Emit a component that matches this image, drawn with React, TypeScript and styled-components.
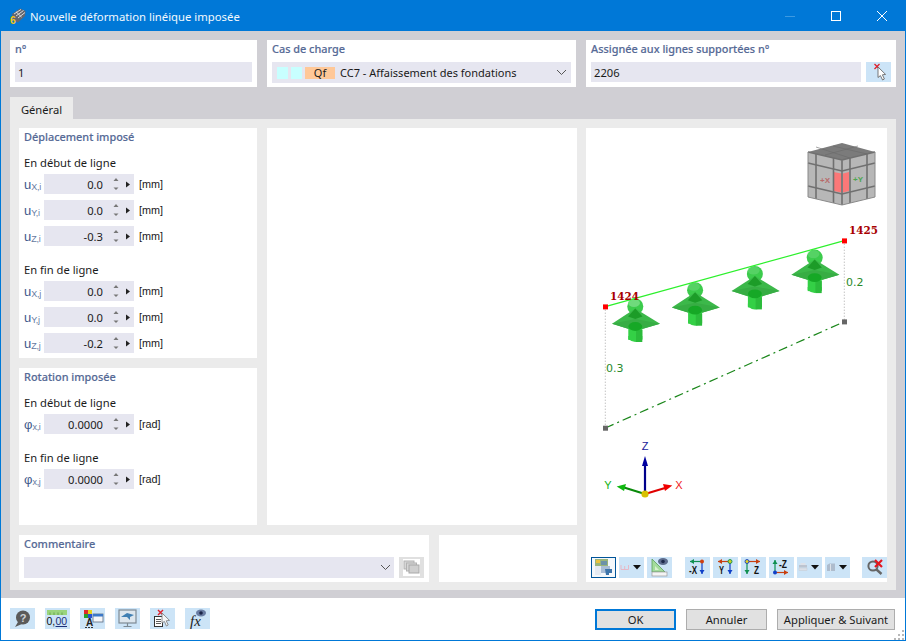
import React from "react";
import styled, { createGlobalStyle } from "styled-components";

const GlobalStyle = createGlobalStyle`
  html, body { margin: 0; padding: 0; background: #fff; }
  body { font-family: "Noto Sans", "Open Sans", sans-serif; font-size: 12px; color: #1a1a1a; }
  * { box-sizing: border-box; }
`;

const Win = styled.div`
  width: 906px;
  height: 641px;
  border: 1px solid #0078d7;
  display: flex;
  flex-direction: column;
  background: #fff;
  position: relative;
  overflow: hidden;
`;

const TitleBar = styled.div`
  height: 30px;
  flex: none;
  background: #0078d7;
  color: #fff;
  display: flex;
  align-items: center;
  padding-left: 9px;
`;

const TitleText = styled.div`
  flex: 1;
  margin-left: 4px;
  font-size: 11.3px;
  color: #f2f8fd;
`;

const CaptionButton = styled.div`
  width: 46px;
  height: 30px;
  display: flex;
  align-items: center;
  justify-content: center;
`;

const Body = styled.div`
  flex: 1;
  background: #d0cfd4;
  padding: 9px 9px 8px;
  display: flex;
  flex-direction: column;
`;

const TopRow = styled.div`
  display: grid;
  grid-template-columns: 247px 309px 310px;
  column-gap: 10px;
  height: 47px;
  margin-bottom: 10px;
`;

const Panel = styled.div`
  background: #fff;
  padding: 0 5px;
`;

const PanelLabel = styled.div`
  height: 22px;
  line-height: 17px;
  font-size: 10.9px;
  font-weight: 500;
  color: #566a96;
  -webkit-text-stroke: 0.15px #566a96;
`;

const TextInput = styled.div`
  height: 20px;
  flex: 1;
  background: #e6e6f0;
  padding-left: 3px;
  line-height: 21px;
  font-size: 11.2px;
  color: #1a1a1a;
`;

const InputRow = styled.div`
  display: flex;
  gap: 5px;
`;

const SelectBox = styled.div`
  height: 21px;
  flex: 1;
  background: #e6e6f0;
  display: flex;
  align-items: center;
  padding-left: 5px;
  padding-right: 4px;
  font-size: 11px;
  color: #1a1a1a;
`;

const Swatch = styled.span<{ $wide?: boolean; $color: string }>`
  display: flex;
  align-items: center;
  justify-content: center;
  width: ${(p) => (p.$wide ? 30 : 11)}px;
  height: 12px;
  background: ${(p) => p.$color};
  margin-right: 3px;
`;

const SelectText = styled.span`
  flex: 1;
  margin-left: 2px;
`;

const IconButton = styled.div<{ $active?: boolean; $muted?: boolean }>`
  width: 25px;
  height: 21px;
  flex: none;
  background: ${(p) => (p.$active ? "#f4f8fb" : p.$muted ? "#e0e0e0" : "#cce4f7")};
  border: ${(p) => (p.$active ? "1px solid #005499" : "none")};
  display: flex;
  align-items: center;
  justify-content: center;
`;

const ShortIconButton = styled(IconButton)`
  height: 20px;
`;

const TabStrip = styled.div`
  display: flex;
  height: 22px;
`;

const Tab = styled.div`
  width: 63px;
  background: #ebebeb;
  text-align: center;
  line-height: 25px;
  font-size: 11.2px;
`;

const TabContent = styled.div`
  flex: 1;
  background: #ebebeb;
  padding: 9px 9px 8px;
  display: flex;
  gap: 9px;
`;

const LeftArea = styled.div`
  width: 558px;
  display: flex;
  flex-direction: column;
  gap: 10px;
`;

const UpperArea = styled.div`
  height: 397px;
  display: flex;
  gap: 10px;
`;

const InputsColumn = styled.div`
  width: 238px;
  display: flex;
  flex-direction: column;
  gap: 10px;
`;

const SectionPanel = styled(Panel)<{ $height: number }>`
  height: ${(p) => p.$height}px;
`;

const SectionHead = styled.div`
  height: 18px;
  line-height: 18px;
  font-size: 10.9px;
  font-weight: 500;
  color: #566a96;
  -webkit-text-stroke: 0.15px #566a96;
`;

const Group = styled.div<{ $first?: boolean }>`
  margin-top: ${(p) => (p.$first ? 8 : 15)}px;
`;

const SubHead = styled.div`
  height: 20px;
  line-height: 17px;
  font-size: 11.2px;
`;

const Rows = styled.div`
  display: flex;
  flex-direction: column;
  gap: 6px;
`;

const FieldRow = styled.div`
  display: flex;
  align-items: center;
  height: 20px;
`;

const SymbolLabel = styled.div`
  width: 20px;
  font-family: "Liberation Sans", sans-serif;
  font-size: 13px;
  color: #3f5a8c;
  white-space: nowrap;
  sub {
    font-size: 9px;
    vertical-align: baseline;
    position: relative;
    top: 1px;
    color: #66799f;
    letter-spacing: -0.3px;
  }
`;

const SpinBox = styled.div`
  width: 90px;
  height: 20px;
  background: #e6e6f0;
  display: flex;
  align-items: center;
  font-size: 11.2px;
`;

const SpinValue = styled.div`
  width: 59px;
  text-align: right;
`;

const Unit = styled.div`
  margin-left: 5px;
  font-family: "Liberation Sans", sans-serif;
  font-size: 10.8px;
`;

const MiddlePanel = styled(Panel)`
  flex: 1;
`;

const LowerArea = styled.div`
  flex: 1;
  display: flex;
  gap: 10px;
`;

const CommentPanel = styled(Panel)`
  width: 410px;
`;

const BlankPanel = styled(Panel)`
  flex: 1;
`;

const Chevron = styled.svg`
  width: 11px;
  height: 7px;
  flex: none;
  margin-left: auto;
  margin-right: 0;
`;

const CommentSelect = styled(SelectBox)`
  padding-right: 3px;
`;

const Viewport = styled.div`
  width: 301px;
  background: #fff;
  display: flex;
  flex-direction: column;
`;

const Scene = styled.svg`
  width: 301px;
  height: 429px;
  flex: none;
  display: block;
`;

const SceneToolbar = styled.div`
  display: flex;
  padding-left: 5px;
  gap: 3px;
`;

const ToolGap = styled.div`
  width: 7px;
`;

const Footer = styled.div`
  height: 42px;
  flex: none;
  background: #fff;
  display: flex;
  justify-content: space-between;
  padding: 10px 10px 0 9px;
`;

const FooterTools = styled.div`
  display: flex;
  gap: 10px;
`;

const FooterActions = styled.div`
  display: flex;
  gap: 10px;
  padding-top: 1px;
`;

const ActionButton = styled.div<{ $primary?: boolean; $width: number }>`
  width: ${(p) => p.$width}px;
  height: 21px;
  background: #e1e1e1;
  border: ${(p) => (p.$primary ? "2px solid #0078d7" : "1px solid #adadad")};
  text-align: center;
  line-height: ${(p) => (p.$primary ? 17 : 19)}px;
  font-size: 11.2px;
`;

const Grip = styled.svg`
  position: absolute;
  right: 0;
  bottom: 0;
  width: 12px;
  height: 12px;
`;

const ChevronIcon = () => (
  <Chevron viewBox="0 0 11 7">
    <path d="M1 1 L5.5 5.5 L10 1" fill="none" stroke="#555" strokeWidth="1" />
  </Chevron>
);

const SpinArrows = () => (
  <svg width="31" height="20" viewBox="0 0 31 20">
    <path d="M10.5 7 L13 4 L15.5 7 Z" fill="#777" />
    <path d="M10.5 13.5 L13 16 L15.5 13.5 Z" fill="#777" />
    <path d="M23 7.5 L27 10.5 L23 13.5 Z" fill="#222" />
  </svg>
);

type SpinFieldProps = {
  base: string;
  sub: string;
  value: string;
  unit: string;
};

const SpinField: React.FC<SpinFieldProps> = ({ base, sub, value, unit }) => (
  <FieldRow>
    <SymbolLabel>
      {base}
      <sub>{sub}</sub>
    </SymbolLabel>
    <SpinBox>
      <SpinValue>{value}</SpinValue>
      <SpinArrows />
    </SpinBox>
    <Unit>{unit}</Unit>
  </FieldRow>
);

const AppIcon = () => (
  <svg width="16" height="16" viewBox="0 0 16 16">
    <path d="M2 6 L10 0.5 L15.5 3 L15 8 L8 14.5 L3 12 Z" fill="#63666e" />
    <path d="M4 6 L11 1.5 M6 8 L13.5 2.5 M8 10 L15 4.5 M6 3.7 L11.5 9" stroke="#e4e6ea" strokeWidth="0.9" />
    <text x="0" y="15.5" fontFamily="Liberation Sans" fontWeight="700" fontSize="10.5" fill="#f4c414">
      6
    </text>
  </svg>
);

const PickIcon = () => (
  <svg width="25" height="20" viewBox="0 0 25 20">
    <path d="M8.5 2 L13.5 7 M13.5 2 L8.5 7" stroke="#e0202c" strokeWidth="1.3" />
    <path d="M12 5 L12 15.5 L14.4 13.6 L16.6 18 L18.4 17 L16.4 12.8 L19.6 12.4 Z" fill="#fff" stroke="#6a6a6a" strokeWidth="0.9" />
  </svg>
);

const StackIcon = () => (
  <svg width="25" height="21" viewBox="0 0 25 21">
    <rect x="4" y="2" width="17" height="17" fill="#fff" />
    <rect x="5" y="4" width="10" height="8" fill="#d6d6d6" stroke="#b2b2b2" />
    <rect x="7.5" y="6" width="10" height="8" fill="#d6d6d6" stroke="#b2b2b2" />
    <rect x="10" y="8" width="10" height="8" fill="#cfcfcf" stroke="#a8a8a8" />
  </svg>
);

const SnapshotIcon = () => (
  <svg width="23" height="19" viewBox="0 0 23 19">
    <rect x="3" y="1" width="13" height="7" fill="#9ab47a" />
    <rect x="4" y="2" width="4" height="3" fill="#e8c23c" />
    <rect x="9" y="3" width="6" height="4" fill="#6c92a8" />
    <rect x="3" y="8" width="6" height="9" fill="#e4eaf2" />
    <rect x="9" y="8" width="9" height="7" fill="#a9bdd6" />
    <path d="M13 11 H20 V15 H17 V17 H14 Z" fill="#3d74aa" />
  </svg>
);

const DropArrow = () => (
  <svg width="8" height="5" viewBox="0 0 8 5">
    <path d="M0 0 H8 L4 4.5 Z" fill="#111" />
  </svg>
);

const DropButton = styled(IconButton)`
  gap: 2px;
  justify-content: flex-start;
  padding-left: 1px;
`;

const FadedComb = () => (
  <svg width="11" height="21" viewBox="0 0 11 21">
    <path d="M1 8 V12.5 H8.5 V8 M4.7 9 V12.5" fill="none" stroke="#e6b8c6" strokeWidth="1" />
  </svg>
);

const FadedPrinter = () => (
  <svg width="11" height="21" viewBox="0 0 11 21">
    <rect x="1" y="8" width="8" height="2.5" fill="#bcc4d0" />
    <rect x="1" y="11" width="8" height="2.5" fill="#dbe0e8" stroke="#c4cad4" strokeWidth="0.5" />
    <rect x="2.5" y="6" width="5" height="2" fill="#dde1e8" />
  </svg>
);

const FadedBox = () => (
  <svg width="11" height="21" viewBox="0 0 11 21">
    <path d="M1 8 L3.5 6.5 H9 V14 H1 Z" fill="#aebccd" />
    <path d="M4.5 7 V14" stroke="#dde3ea" />
  </svg>
);

const SetSquareIcon = () => (
  <svg width="25" height="21" viewBox="0 0 25 21">
    <path d="M5 2 L5 15 L18 15 Z" fill="#a3dc9c" stroke="#5aa05a" strokeWidth="0.8" />
    <path d="M8 9 L8 13 L12 13 Z" fill="#d8f0d0" />
    <rect x="5" y="15" width="15" height="4" fill="#f4f4f4" stroke="#9a9a9a" strokeWidth="0.7" />
    <ellipse cx="16" cy="4.5" rx="5" ry="3.4" fill="#5d6d8e" />
    <circle cx="16" cy="4.5" r="1.8" fill="#1e2a4c" />
  </svg>
);

type AxisIconProps = {
  origin: [number, number];
  hEnd: number;
  vEnd: number;
  hColor: string;
  vColor: string;
  dot: string;
  dotStroke?: string;
  label: string;
  labelX: number;
  labelY: number;
  labelWidth: number;
};

const AxisIcon: React.FC<AxisIconProps> = ({ origin, hEnd, vEnd, hColor, vColor, dot, dotStroke, label, labelX, labelY, labelWidth }) => {
  const [ox, oy] = origin;
  const hs = hEnd > ox ? -1 : 1;
  const vs = vEnd > oy ? -1 : 1;
  return (
    <svg width="25" height="21" viewBox="0 0 25 21">
      <path d={`M${ox} ${oy} H${hEnd}`} stroke={hColor} strokeWidth="1.2" />
      <path d={`M${hEnd} ${oy} l${hs * 4} -2.5 v5 Z`} fill={hColor} />
      <path d={`M${ox} ${oy} V${vEnd}`} stroke={vColor} strokeWidth="1.2" />
      <path d={`M${ox} ${vEnd} l-2.5 ${vs * 4} h5 Z`} fill={vColor} />
      <circle cx={ox} cy={oy} r="2" fill={dot} stroke={dotStroke} strokeWidth={dotStroke ? 0.9 : 0} />
      <text
        x={labelX}
        y={labelY}
        textLength={labelWidth}
        lengthAdjust="spacingAndGlyphs"
        fontFamily="Liberation Sans"
        fontWeight="700"
        fontSize="10"
        fill="#111"
      >
        {label}
      </text>
    </svg>
  );
};

const ResetViewIcon = () => (
  <svg width="25" height="21" viewBox="0 0 25 21">
    <circle cx="11" cy="9" r="4.6" fill="none" stroke="#666" strokeWidth="2" />
    <path d="M14.5 12.5 L19.5 17" stroke="#666" strokeWidth="2.4" />
    <path d="M13 3 L20 10 M20 3 L13 10" stroke="#e4161e" strokeWidth="2.2" />
  </svg>
);

const HelpIcon = () => (
  <svg width="25" height="21" viewBox="0 0 25 21">
    <circle cx="13" cy="9.5" r="7" fill="#5a5a5a" />
    <path d="M8 14 L5 19 L12 16 Z" fill="#5a5a5a" />
    <text x="13" y="13.5" textAnchor="middle" fontFamily="Liberation Sans" fontWeight="700" fontSize="11" fill="#cfd3d6">
      ?
    </text>
  </svg>
);

const UnitsIcon = () => (
  <svg width="25" height="21" viewBox="0 0 25 21">
    <rect x="2" y="2" width="20" height="5" fill="#9ad47c" />
    <path d="M5 4.5 V7 M9 4.5 V7 M13 4.5 V7 M17 4.5 V7" stroke="#5d9a45" strokeWidth="0.8" />
    <text x="1.5" y="16.5" fontFamily="Liberation Sans" fontSize="10.5" fill="#111">
      0,
    </text>
    <text x="10.5" y="16.5" fontFamily="Liberation Sans" fontSize="10.5" fill="#1c2f7a">
      00
    </text>
    <path d="M10.5 18.5 H22" stroke="#1c2f7a" />
  </svg>
);

const ColorsIcon = () => (
  <svg width="25" height="21" viewBox="0 0 25 21">
    <rect x="4" y="2" width="4" height="4" fill="#e02a2a" />
    <rect x="8" y="2" width="4" height="4" fill="#e6d21c" />
    <rect x="4" y="6" width="4" height="4" fill="#2aa02a" />
    <rect x="8" y="6" width="4" height="4" fill="#2a52d0" />
    <rect x="13" y="6" width="10" height="8" fill="#f4f6f9" stroke="#5a6a80" strokeWidth="0.8" />
    <rect x="13" y="6" width="10" height="2.5" fill="#3a78c8" />
    <text x="6" y="18" fontFamily="Liberation Sans" fontWeight="700" fontSize="10" fill="#222">
      A
    </text>
    <path d="M5 19.5 H14" stroke="#333" strokeDasharray="2 1" />
  </svg>
);

const MonitorIcon = () => (
  <svg width="25" height="21" viewBox="0 0 25 21">
    <rect x="4" y="2" width="17" height="13" fill="#dce6ee" stroke="#7d8a94" strokeWidth="1.2" />
    <path d="M6 9 L12 5 L19 7 L15 9 L15 12 L12 9 Z" fill="#3f7fb3" />
    <path d="M12.5 15 V18 M8.5 18.5 H16.5" stroke="#7d8a94" strokeWidth="1.2" />
  </svg>
);

const DocPickIcon = () => (
  <svg width="25" height="21" viewBox="0 0 25 21">
    <rect x="4.5" y="8.5" width="8" height="10" fill="#fff" stroke="#333" />
    <path d="M6 11.5 H11 M6 13.5 H11 M6 15.5 H11" stroke="#333" strokeWidth="0.8" />
    <path d="M8 2 L13 7 M13 2 L8 7" stroke="#e0202c" strokeWidth="1.4" />
    <path d="M12 5 L12 15 L14.4 13.4 L16.4 18 L18.2 17 L16.2 12.8 L19.5 12.4 Z" fill="#f4f6f8" stroke="#777" strokeWidth="0.8" />
  </svg>
);

const FormulaIcon = () => (
  <svg width="25" height="21" viewBox="0 0 25 21">
    <text x="5" y="17.5" fontFamily="Liberation Serif" fontStyle="italic" fontSize="15" fill="#222">
      fx
    </text>
    <ellipse cx="16" cy="5" rx="5" ry="3.4" fill="#6a7da3" />
    <circle cx="16" cy="5" r="1.8" fill="#1a2448" />
  </svg>
);

const ForceArrow: React.FC<{ index: number }> = ({ index }) => (
  <g transform={`translate(${59.8 * index} ${-16.3 * index})`}>
    <circle cx="635.3" cy="306.5" r="8" fill="#3ccb4c" />
    <ellipse cx="634" cy="303" rx="6" ry="4" fill="#74dc82" opacity={index === 0 ? 0.9 : 0.45} />
    <path d="M612 323.7 L635.3 308.5 L660 323.7 L635.3 331 Z" fill="#3cb84a" />
    <path d="M612 323.7 L635.3 319 L660 323.7 L635.3 331 Z" fill="#37ad44" />
    <path d="M628 316.5 L635.3 308.5 L642.5 316.5 L635.3 319 Z" fill="#1c9c28" />
    <rect x="628.3" y="326" width="14" height="14" fill="#34d046" />
    <path d="M628.3 339 Q635.3 345 642.3 339 V336 H628.3 Z" fill="#34d046" />
    <rect x="636" y="330" width="6.3" height="12" fill="#2bbb3b" />
    <ellipse cx="635.3" cy="326.5" rx="7" ry="4.4" fill="#16a826" />
  </g>
);

const ViewCube = () => (
  <g>
    <path d="M808 152 L842 143 L875 152 L842 160 Z" fill="#7b7b7b" />
    <path d="M808 152 L842 160 L842 205 L808 197 Z" fill="#b7b7b7" />
    <path d="M875 152 L842 160 L842 205 L875 197 Z" fill="#b7b7b7" />
    <path d="M833.5 172 L841.5 173.5 V192.5 L833.5 191 Z" fill="#fb7878" />
    <path d="M843 173.5 L849 172 V191 L843 192.5 Z" fill="#fb7878" />
    <g fill="none" stroke="#707070" strokeWidth="1.6">
      <path d="M808 152 L842 160 L875 152 M842 160 V205" />
      <path d="M808 163 L842 171 L875 163" />
      <path d="M808 186 L842 194 L875 186" />
      <path d="M816 154 V199 M833.5 158 V203 M850 158 V203 M867 154 V199" />
      <path d="M816 147 L850 158 M833 146 L867 154 M825 155 L858 146" strokeWidth="0.6" stroke="#6a6a6a" />
      <path d="M808 152 V197 L842 205 L875 197 V152" strokeWidth="1" stroke="#8a8a8a" />
    </g>
    <text x="825" y="183" textAnchor="middle" fontFamily="Liberation Sans" fontWeight="700" fontSize="8" fill="#b86a6a">
      +X
    </text>
    <text x="858" y="182" textAnchor="middle" fontFamily="Liberation Sans" fontWeight="700" fontSize="8" fill="#4da650">
      +Y
    </text>
  </g>
);

const NodeLabel = styled.text`
  font-family: "DejaVu Serif", serif;
  font-weight: 700;
  font-size: 10.4px;
  fill: #a80000;
`;

const LoadLabel = styled.text`
  font-family: "DejaVu Sans", sans-serif;
  font-size: 11px;
  fill: #2a8a2a;
`;

const AxisLabel = styled.text<{ $color: string }>`
  font-family: "Liberation Sans", sans-serif;
  font-size: 11px;
  fill: ${(p) => p.$color};
`;

const ModelScene = () => (
  <Scene viewBox="586 128 301 429">
    <ViewCube />
    <path d="M605.3 306.7 V428 M844.3 240.7 V321.7" stroke="#a8a8a8" strokeDasharray="1 2" />
    <path d="M605.3 428 L844.3 321.7" stroke="#1a861a" strokeWidth="1.2" strokeDasharray="9 4 2 4" />
    {[0, 1, 2, 3].map((i) => (
      <ForceArrow key={i} index={i} />
    ))}
    <path d="M605.3 306.7 L844.3 240.7" stroke="#2cf02c" strokeWidth="1.2" />
    <rect x="603" y="304.4" width="5" height="5" fill="#ff0000" />
    <rect x="842" y="238.4" width="5" height="5" fill="#ff0000" />
    <rect x="603" y="425.7" width="5" height="5" fill="#666" />
    <rect x="842" y="319.4" width="5" height="5" fill="#666" />
    <NodeLabel x="849" y="234">1425</NodeLabel>
    <NodeLabel x="610" y="300">1424</NodeLabel>
    <LoadLabel x="606" y="372">0.3</LoadLabel>
    <LoadLabel x="846" y="286">0.2</LoadLabel>
    <path d="M645 494 V462" stroke="#00008b" strokeWidth="2.2" />
    <path d="M645 456 L642 466 H648 Z" fill="#0000a0" />
    <path d="M645 494 L624 487.5" stroke="#0a8a0a" strokeWidth="2.2" />
    <path d="M616.7 486.5 L626 484 L624 491 Z" fill="#0fb80f" />
    <path d="M645 494 L665 488" stroke="#e00000" strokeWidth="2.2" />
    <path d="M672.3 485.5 L663 484 L665 491 Z" fill="#f00000" />
    <circle cx="645" cy="494" r="3.6" fill="#d8c000" />
    <AxisLabel x="645" y="450" textAnchor="middle" $color="#1a1a9a">Z</AxisLabel>
    <AxisLabel x="608" y="489" textAnchor="middle" $color="#10b010">Y</AxisLabel>
    <AxisLabel x="679" y="489" textAnchor="middle" $color="#f02020">X</AxisLabel>
  </Scene>
);

export default function App() {
  return (
    <>
      <GlobalStyle />
      <Win>
        <TitleBar>
          <AppIcon />
          <TitleText>Nouvelle déformation linéique imposée</TitleText>
          <CaptionButton>
            <svg width="10" height="10" viewBox="0 0 10 10">
              <path d="M0 5.5 H10" stroke="#3d9ae2" />
            </svg>
          </CaptionButton>
          <CaptionButton>
            <svg width="10" height="10" viewBox="0 0 10 10">
              <rect x="0.5" y="0.5" width="9" height="9" fill="none" stroke="#fff" />
            </svg>
          </CaptionButton>
          <CaptionButton>
            <svg width="10" height="10" viewBox="0 0 10 10">
              <path d="M0 0 L10 10 M10 0 L0 10" stroke="#fff" />
            </svg>
          </CaptionButton>
        </TitleBar>
        <Body>
          <TopRow>
            <Panel>
              <PanelLabel>n°</PanelLabel>
              <InputRow>
                <TextInput>1</TextInput>
              </InputRow>
            </Panel>
            <Panel>
              <PanelLabel>Cas de charge</PanelLabel>
              <SelectBox>
                <Swatch $color="#c8ffff" />
                <Swatch $color="#c8ffff" />
                <Swatch $wide $color="#ffc898">Qf</Swatch>
                <SelectText>CC7 - Affaissement des fondations</SelectText>
                <ChevronIcon />
              </SelectBox>
            </Panel>
            <Panel>
              <PanelLabel>Assignée aux lignes supportées n°</PanelLabel>
              <InputRow>
                <TextInput>2206</TextInput>
                <ShortIconButton>
                  <PickIcon />
                </ShortIconButton>
              </InputRow>
            </Panel>
          </TopRow>
          <TabStrip>
            <Tab>Général</Tab>
          </TabStrip>
          <TabContent>
            <LeftArea>
              <UpperArea>
                <InputsColumn>
                  <SectionPanel $height={230}>
                    <SectionHead>Déplacement imposé</SectionHead>
                    <Group $first>
                      <SubHead>En début de ligne</SubHead>
                      <Rows>
                        <SpinField base="u" sub="X,i" value="0.0" unit="[mm]" />
                        <SpinField base="u" sub="Y,i" value="0.0" unit="[mm]" />
                        <SpinField base="u" sub="Z,i" value="-0.3" unit="[mm]" />
                      </Rows>
                    </Group>
                    <Group>
                      <SubHead>En fin de ligne</SubHead>
                      <Rows>
                        <SpinField base="u" sub="X,j" value="0.0" unit="[mm]" />
                        <SpinField base="u" sub="Y,j" value="0.0" unit="[mm]" />
                        <SpinField base="u" sub="Z,j" value="-0.2" unit="[mm]" />
                      </Rows>
                    </Group>
                  </SectionPanel>
                  <SectionPanel $height={157}>
                    <SectionHead>Rotation imposée</SectionHead>
                    <Group $first>
                      <SubHead>En début de ligne</SubHead>
                      <SpinField base="φ" sub="x,i" value="0.0000" unit="[rad]" />
                    </Group>
                    <Group>
                      <SubHead>En fin de ligne</SubHead>
                      <SpinField base="φ" sub="x,j" value="0.0000" unit="[rad]" />
                    </Group>
                  </SectionPanel>
                </InputsColumn>
                <MiddlePanel />
              </UpperArea>
              <LowerArea>
                <CommentPanel>
                  <PanelLabel>Commentaire</PanelLabel>
                  <InputRow>
                    <CommentSelect>
                      <ChevronIcon />
                    </CommentSelect>
                    <IconButton $muted>
                      <StackIcon />
                    </IconButton>
                  </InputRow>
                </CommentPanel>
                <BlankPanel />
              </LowerArea>
            </LeftArea>
            <Viewport>
              <ModelScene />
              <SceneToolbar>
                <IconButton $active>
                  <SnapshotIcon />
                </IconButton>
                <DropButton>
                  <FadedComb />
                  <DropArrow />
                </DropButton>
                <IconButton>
                  <SetSquareIcon />
                </IconButton>
                <ToolGap />
                <IconButton>
                  <AxisIcon origin={[17, 4.5]} hEnd={5} vEnd={17} hColor="#109050" vColor="#1040c8" dot="#d04010" label="-X" labelX={4} labelY={16.5} labelWidth={8} />
                </IconButton>
                <IconButton>
                  <AxisIcon origin={[17, 4.5]} hEnd={5} vEnd={17} hColor="#c84010" vColor="#1040c8" dot="#d0d020" dotStroke="#109050" label="Y" labelX={6} labelY={16.5} labelWidth={5} />
                </IconButton>
                <IconButton>
                  <AxisIcon origin={[6, 4.5]} hEnd={19} vEnd={17} hColor="#c84010" vColor="#109050" dot="#e0d020" dotStroke="#1040c8" label="Z" labelX={13} labelY={16.5} labelWidth={5} />
                </IconButton>
                <IconButton>
                  <AxisIcon origin={[6, 15.5]} hEnd={19} vEnd={3} hColor="#c84010" vColor="#109050" dot="#1040c8" label="-Z" labelX={10} labelY={10.5} labelWidth={8} />
                </IconButton>
                <DropButton>
                  <FadedPrinter />
                  <DropArrow />
                </DropButton>
                <DropButton>
                  <FadedBox />
                  <DropArrow />
                </DropButton>
                <ToolGap />
                <IconButton>
                  <ResetViewIcon />
                </IconButton>
              </SceneToolbar>
            </Viewport>
          </TabContent>
        </Body>
        <Footer>
          <FooterTools>
            <IconButton><HelpIcon /></IconButton>
            <IconButton><UnitsIcon /></IconButton>
            <IconButton><ColorsIcon /></IconButton>
            <IconButton><MonitorIcon /></IconButton>
            <IconButton><DocPickIcon /></IconButton>
            <IconButton><FormulaIcon /></IconButton>
          </FooterTools>
          <FooterActions>
            <ActionButton $primary $width={81}>OK</ActionButton>
            <ActionButton $width={81}>Annuler</ActionButton>
            <ActionButton $width={118}>Appliquer &amp; Suivant</ActionButton>
          </FooterActions>
        </Footer>
        <Grip viewBox="0 0 12 12">
          <path d="M9 2 h2 v2 h-2 Z M5 6 h2 v2 h-2 Z M9 6 h2 v2 h-2 Z M1 10 h2 v2 h-2 Z M5 10 h2 v2 h-2 Z M9 10 h2 v2 h-2 Z" fill="#b8b8b8" />
        </Grip>
      </Win>
    </>
  );
}
